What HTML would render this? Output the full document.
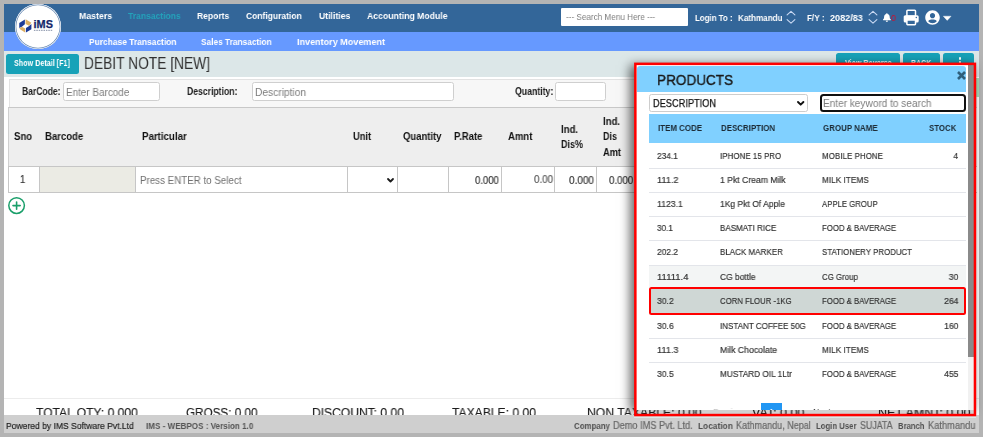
<!DOCTYPE html>
<html><head><meta charset="utf-8"><title>Debit Note</title>
<style>
html,body{margin:0;padding:0;}
body{width:983px;height:437px;overflow:hidden;background:#b4b4b4;position:relative;font-family:"Liberation Sans",sans-serif;}
.a{position:absolute;box-sizing:border-box;}
.t{will-change:transform;position:absolute;white-space:pre;line-height:20px;height:20px;font-family:"Liberation Sans",sans-serif;z-index:5;}
svg{position:absolute;overflow:visible;}
</style></head><body>
<!-- app background -->
<div class="a" style="left:4px;top:4px;width:975px;height:429px;background:#fff;"></div>
<!-- top nav -->
<div class="a" style="left:4px;top:4px;width:975px;height:28px;background:#336699;"></div>
<div class="a" style="left:4px;top:32px;width:975px;height:19px;background:#6699ff;"></div>
<!-- logo -->
<div class="a" style="left:14.5px;top:3.6px;width:46px;height:45.7px;border-radius:50%;background:#fff;box-shadow:inset 0 0 0 0.6px #fff, inset 0 0 0 1.3px #6a8bb3;z-index:6;"></div>
<svg style="left:0;top:0;z-index:7;" width="70" height="52" viewBox="0 0 70 52">
<polygon points="19.27,23.07 24.86,19.50 24.86,24.26 21.89,26.63 19.27,28.06" fill="#1b3a96"/>
<polygon points="25.58,19.26 31.40,22.71 29.02,25.68 25.58,23.90" fill="#dcae62"/>
<polygon points="19.27,28.78 21.89,26.87 25.10,28.54 25.10,32.58" fill="#dcae62"/>
<polygon points="31.40,23.90 31.40,29.13 25.93,32.46 25.93,28.06 28.79,26.16" fill="#1b3a96"/>
<text x="33.6" y="28.0" font-family="Liberation Sans, sans-serif" font-weight="700" font-size="10.2" fill="#14276a" stroke="#14276a" stroke-width="0.25" textLength="19.3" lengthAdjust="spacingAndGlyphs">iMS</text>
<line x1="33.9" y1="30.4" x2="52.8" y2="30.4" stroke="#9aa3b6" stroke-width="1.1" stroke-dasharray="1.5 0.9"/>
</svg>
<!-- search -->
<div class="a" style="left:561.3px;top:7.5px;width:126.7px;height:18.3px;background:#fff;border-radius:1px;"></div>
<!-- chevrons up/down -->
<svg style="left:786px;top:10px;" width="10" height="14" viewBox="0 0 10 14"><path d="M1.1 4.9 L5 1.3 L8.9 4.9 M1.1 9.6 L5 13.2 L8.9 9.6" fill="none" stroke="#c9d9f3" stroke-width="1.1" stroke-linecap="round" stroke-linejoin="round"/></svg>
<svg style="left:868px;top:10px;" width="10" height="14" viewBox="0 0 10 14"><path d="M1.1 4.9 L5 1.3 L8.9 4.9 M1.1 9.6 L5 13.2 L8.9 9.6" fill="none" stroke="#c9d9f3" stroke-width="1.1" stroke-linecap="round" stroke-linejoin="round"/></svg>
<!-- bell -->
<svg style="left:883.4px;top:12.7px;" width="7.8" height="9" viewBox="0 0 14 16"><path d="M7 16c1.1 0 2-.9 2-2H5c0 1.1.9 2 2 2zm6.7-4.7c-.6-.6-1.7-1.6-1.7-4.8 0-2.400-1.700-4.400-4-4.900V1c0-.6-.4-1-1-1S6 .4 6 1v.6c-2.300.5-4 2.500-4 4.900 0 3.200-1.100 4.200-1.700 4.800-.2.200-.3.400-.3.700 0 .5.400 1 1 1h12c.6 0 1-.5 1-1 0-.3-.1-.5-.3-.7z" fill="#fff"/></svg>
<!-- printer -->
<svg style="left:0;top:0;" width="983" height="32" viewBox="0 0 983 32">
<rect x="906.9" y="10.2" width="8.6" height="6" rx="0.8" fill="none" stroke="#fff" stroke-width="1.5"/>
<rect x="903.7" y="15.2" width="15" height="7.3" rx="1.6" fill="#fff"/>
<rect x="906.9" y="20.1" width="8.6" height="4.6" rx="0.6" fill="#336699" stroke="#fff" stroke-width="1.5"/>
<circle cx="916.3" cy="17.4" r="0.75" fill="#336699"/>
</svg>
<!-- user -->
<svg style="left:924.5px;top:9.5px;" width="15" height="15" viewBox="0 0 496 512"><path fill="#fff" d="M248 8C111 8 0 119 0 256s111 248 248 248 248-111 248-248S385 8 248 8zm0 96c48.600 0 88 39.400 88 88s-39.400 88-88 88-88-39.400-88-88 39.400-88 88-88zm0 344c-58.700 0-111.300-26.600-146.500-68.200 18.800-35.400 55.600-59.800 98.500-59.800 2.400 0 4.800.4 7.100 1.100 13 4.200 26.600 6.900 40.900 6.900 14.300 0 28-2.700 40.900-6.900 2.300-.7 4.700-1.100 7.100-1.100 42.900 0 79.700 24.400 98.500 59.800C359.300 421.400 306.700 448 248 448z"/></svg>
<svg style="left:942.8px;top:16.4px;" width="8.4" height="4.6" viewBox="0 0 8.4 4.6"><path d="M0.3 0.2 H8.1 L4.2 4.4 Z" fill="#fff" stroke="#fff" stroke-width="0.4" stroke-linejoin="round"/></svg>

<!-- title bar -->
<div class="a" style="left:4px;top:51px;width:975px;height:26.3px;background:#dce7e8;"></div>
<div class="a" style="left:5.7px;top:53.6px;width:73.2px;height:20.2px;background:#17a2b8;border-radius:2.5px;"></div>
<div class="a" style="left:836.3px;top:53.1px;width:64.2px;height:20.9px;background:#17a2b8;border-radius:2.5px;"></div>
<div class="a" style="left:903.4px;top:53.1px;width:36.6px;height:20.9px;background:#17a2b8;border-radius:2.5px;"></div>
<div class="a" style="left:943.4px;top:53.1px;width:31.1px;height:20.9px;background:#17a2b8;border-radius:2.5px;"></div>
<div class="a" style="left:958.7px;top:57.3px;width:2.4px;height:2.4px;border-radius:50%;background:#fff;"></div>
<div class="a" style="left:958.7px;top:61.3px;width:2.4px;height:2.4px;border-radius:50%;background:#fff;"></div>

<!-- form row -->
<div class="a" style="left:9px;top:79px;width:968px;height:28.6px;background:#f7f7f7;border:1px solid #e2e2e2;border-bottom:none;"></div>
<div class="a" style="left:62.5px;top:82.2px;width:97px;height:18.8px;background:#fff;border:1px solid #cfcfcf;border-radius:2.5px;"></div>
<div class="a" style="left:252.2px;top:82.2px;width:201.4px;height:18.8px;background:#fff;border:1px solid #cfcfcf;border-radius:2.5px;"></div>
<div class="a" style="left:555px;top:82.2px;width:50.8px;height:18.8px;background:#fff;border:1px solid #cfcfcf;border-radius:2.5px;"></div>
<div class="a" style="left:976.3px;top:78px;width:2.7px;height:19px;background:#a8dcb9;"></div>

<!-- table -->
<div class="a" style="left:8.2px;top:106.6px;width:969px;height:60px;background:#eeeeee;border:1px solid #cfcfcf;border-top:1.5px solid #c8c8c8;border-right:none;"></div>
<div class="a" style="left:8.2px;top:166.4px;width:969px;height:26.4px;background:#fff;border:1px solid #c6c6c6;border-right:none;"></div>
<div class="a" style="left:39.3px;top:167.2px;width:96.6px;height:24.8px;background:#ebebe4;border-left:1px solid #c6c6c6;border-right:1px solid #c6c6c6;"></div>
<div class="a" style="left:347.3px;top:167.2px;width:1px;height:24.8px;background:#c6c6c6;"></div>
<div class="a" style="left:396.9px;top:167.2px;width:1px;height:24.8px;background:#c6c6c6;"></div>
<div class="a" style="left:447.8px;top:167.2px;width:1px;height:24.8px;background:#c6c6c6;"></div>
<div class="a" style="left:501.2px;top:167.2px;width:1px;height:24.8px;background:#c6c6c6;"></div>
<div class="a" style="left:554.3px;top:167.2px;width:1px;height:24.8px;background:#c6c6c6;"></div>
<div class="a" style="left:596.3px;top:167.2px;width:1px;height:24.8px;background:#c6c6c6;"></div>
<svg style="left:386.9px;top:177.5px;" width="7" height="5" viewBox="0 0 7 5"><path d="M1 1 L3.500 3.500 L6 1" fill="none" stroke="#1a1a1a" stroke-width="1.8" stroke-linecap="round" stroke-linejoin="round"/></svg>
<!-- plus -->
<svg style="left:8.4px;top:197.2px;" width="17.2" height="17.2" viewBox="0 0 17.2 17.2"><circle cx="8.6" cy="8.6" r="7.8" fill="#fff" stroke="#1a9f6a" stroke-width="1.5"/><path d="M8.6 5 V12.2 M5 8.6 H12.2" stroke="#1a9f6a" stroke-width="1.6" stroke-linecap="round"/></svg>
<!-- faint line -->
<div class="a" style="left:4px;top:398.2px;width:975px;height:1px;background:#ececec;"></div>

<!-- footer -->
<div class="a" style="left:4px;top:414.7px;width:975px;height:18.3px;background:#cfcfcf;z-index:50;"></div>

<!-- modal shadow + box -->
<div class="a" style="left:636px;top:66px;width:338.5px;height:343px;background:#fff;box-shadow:-4px 1px 10px 2px rgba(0,0,0,.6);z-index:20;"></div>
<div class="a" style="left:636.4px;top:65px;width:338px;height:344.75px;background:#fff;z-index:23;"></div>
<div class="a" style="left:636.4px;top:409.75px;width:338px;height:6px;background:#d1d1d1;z-index:21;"></div>
<!-- modal header -->
<div class="a" style="left:637px;top:65.8px;width:329.4px;height:26px;background:#80d0ff;border-radius:3px 3px 0 0;z-index:24;"></div>
<svg style="left:956.8px;top:71.2px;z-index:25;" width="9" height="9" viewBox="0 0 9 9"><path d="M1 1 L8 8 M8 1 L1 8" stroke="#2f5f7c" stroke-width="2.6" stroke-linecap="butt"/></svg>
<!-- select + search -->
<div class="a" style="left:649.4px;top:94.3px;width:158.2px;height:17.4px;background:#fff;border:1px solid #cdcdcd;border-radius:2.5px;z-index:24;"></div>
<svg style="left:796.6px;top:100.6px;z-index:25;" width="7.4" height="5" viewBox="0 0 7.4 5"><path d="M1 1 L3.7 3.7 L6.4 1" fill="none" stroke="#111" stroke-width="1.9" stroke-linecap="round" stroke-linejoin="round"/></svg>
<div class="a" style="left:819.9px;top:94.3px;width:145.8px;height:17.700px;background:#fff;border:2px solid #111;border-radius:3.5px;z-index:24;"></div>
<!-- modal table header -->
<div class="a" style="left:649px;top:114.3px;width:317px;height:28.600px;background:#80d0ff;z-index:24;"></div>
<!-- rows -->
<div class="a" style="left:649px;top:167.6px;width:317px;height:1px;background:#e3e5ea;z-index:24;"></div>
<div class="a" style="left:649px;top:191.9px;width:317px;height:1px;background:#e3e5ea;z-index:24;"></div>
<div class="a" style="left:649px;top:216.2px;width:317px;height:1px;background:#e3e5ea;z-index:24;"></div>
<div class="a" style="left:649px;top:240.4px;width:317px;height:1px;background:#e3e5ea;z-index:24;"></div>
<div class="a" style="left:649px;top:264.7px;width:317px;height:23px;background:#f3f5f5;border-top:1px solid #e3e5ea;z-index:24;"></div>
<div class="a" style="left:649px;top:287.400px;width:317px;height:27.300px;background:#cfd7d5;border:2px solid #f00;border-radius:2.5px;z-index:25;"></div>
<div class="a" style="left:649px;top:337.600px;width:317px;height:1px;background:#e3e5ea;z-index:24;"></div>
<div class="a" style="left:649px;top:361.9px;width:317px;height:1px;background:#e3e5ea;z-index:24;"></div>
<!-- pagination -->
<div class="a" style="left:761.2px;top:402.9px;width:20.7px;height:6.85px;background:#2196f3;z-index:24;"></div>
<div class="a" style="left:636.4px;top:400px;width:331px;height:9.75px;overflow:hidden;z-index:25;">
<span class="t" style="left:76.5px;top:1.7px;font-size:9.3px;color:#c4c4c4;transform:scaleX(.93);transform-origin:0 50%;">Previous</span>
<span class="t" style="left:132.600px;top:1.6px;font-size:9.3px;color:#fff;">1</span>
<span class="t" style="left:176.600px;top:1.9px;font-size:9.3px;color:#333;transform:scaleX(.93);transform-origin:0 50%;">Next</span>
</div>
<!-- scrollbar -->
<div class="a" style="left:967.8px;top:65px;width:6px;height:344.75px;background:#f1f1f1;z-index:24;"></div>
<div class="a" style="left:967.8px;top:65px;width:6px;height:291.5px;background:#8a8a8a;z-index:25;"></div>
<div class="a" style="left:634.2px;top:416.3px;width:342px;height:1.8px;background:#dbe9e9;z-index:65;"></div>
<!-- red outline -->
<svg style="left:0;top:0;z-index:70;" width="983" height="437" viewBox="0 0 983 437"><rect x="635.35" y="63.85" width="339.6" height="351.2" fill="none" stroke="#ff0000" stroke-width="2.5"/></svg>

<span class="t" style="left:78.51px;transform-origin:0 50%;top:5.80px;font-size:9.8px;font-weight:700;color:#fff;transform:scaleX(0.8965);">Masters</span>
<span class="t" style="left:128.41px;transform-origin:0 50%;top:5.80px;font-size:9.8px;font-weight:700;color:#24a3bb;transform:scaleX(0.872);">Transactions</span>
<span class="t" style="left:197.41px;transform-origin:0 50%;top:5.80px;font-size:9.8px;font-weight:700;color:#fff;transform:scaleX(0.8722);">Reports</span>
<span class="t" style="left:246.01px;transform-origin:0 50%;top:5.80px;font-size:9.8px;font-weight:700;color:#fff;transform:scaleX(0.8673);">Configuration</span>
<span class="t" style="left:319.21px;transform-origin:0 50%;top:5.80px;font-size:9.8px;font-weight:700;color:#fff;transform:scaleX(0.8844);">Utilities</span>
<span class="t" style="left:367.21px;transform-origin:0 50%;top:5.80px;font-size:9.8px;font-weight:700;color:#fff;transform:scaleX(0.8857);">Accounting Module</span>
<span class="t" style="left:88.51px;transform-origin:0 50%;top:32.00px;font-size:9.8px;font-weight:700;color:#fff;transform:scaleX(0.8593);">Purchase Transaction</span>
<span class="t" style="left:201.01px;transform-origin:0 50%;top:32.00px;font-size:9.8px;font-weight:700;color:#fff;transform:scaleX(0.8486);">Sales Transaction</span>
<span class="t" style="left:296.71px;transform-origin:0 50%;top:32.00px;font-size:9.8px;font-weight:700;color:#fff;transform:scaleX(0.9236);">Inventory Movement</span>
<span class="t" style="left:565.51px;transform-origin:0 50%;top:7.00px;font-size:9.6px;font-weight:400;color:#808080;transform:scaleX(0.8493);">--- Search Menu Here ---</span>
<span class="t" style="left:695.22px;transform-origin:0 50%;top:8.00px;font-size:9.2px;font-weight:700;color:#fff;transform:scaleX(0.8578);">Login To :</span>
<span class="t" style="left:738.02px;transform-origin:0 50%;top:8.00px;font-size:9.2px;font-weight:700;color:#fff;transform:scaleX(0.8806);">Kathmandu</span>
<span class="t" style="left:806.72px;transform-origin:0 50%;top:8.00px;font-size:9.2px;font-weight:700;color:#fff;transform:scaleX(0.8861);">F/Y :</span>
<span class="t" style="left:829.72px;transform-origin:0 50%;top:8.00px;font-size:9.2px;font-weight:700;color:#fff;transform:scaleX(0.9874);">2082/83</span>
<span class="t" style="left:890.72px;transform-origin:0 50%;top:7.60px;font-size:9.4px;font-weight:400;color:#d0102e;transform:scaleX(0.93);">0</span>
<span class="t" style="left:13.84px;transform-origin:0 50%;top:52.60px;font-size:8.8px;font-weight:700;color:#fff;transform:scaleX(0.8168);">Show Detail [F1]</span>
<span class="t" style="left:83.90px;transform-origin:0 50%;top:53.60px;font-size:16.6px;font-weight:400;color:#303030;transform:scaleX(0.8299);">DEBIT NOTE [NEW]</span>
<span class="t" style="left:844.52px;transform-origin:0 50%;top:52.80px;font-size:9.4px;font-weight:700;color:#fff;transform:scaleX(0.7745);">View Reverse</span>
<span class="t" style="left:911.32px;transform-origin:0 50%;top:52.80px;font-size:9.4px;font-weight:700;color:#fff;transform:scaleX(0.7493);">BACK</span>
<span class="t" style="left:22.49px;transform-origin:0 50%;top:81.70px;font-size:10.4px;font-weight:700;color:#222;transform:scaleX(0.8233);">BarCode:</span>
<span class="t" style="left:66.09px;transform-origin:0 50%;top:82.80px;font-size:10.4px;font-weight:400;color:#7c7c7c;transform:scaleX(0.9528);">Enter Barcode</span>
<span class="t" style="left:186.69px;transform-origin:0 50%;top:81.70px;font-size:10.4px;font-weight:700;color:#222;transform:scaleX(0.8313);">Description:</span>
<span class="t" style="left:255.49px;transform-origin:0 50%;top:82.80px;font-size:10.4px;font-weight:400;color:#7c7c7c;transform:scaleX(0.9811);">Description</span>
<span class="t" style="left:514.69px;transform-origin:0 50%;top:81.70px;font-size:10.4px;font-weight:700;color:#222;transform:scaleX(0.8397);">Quantity:</span>
<span class="t" style="left:14.00px;transform-origin:0 50%;top:127.30px;font-size:10px;font-weight:700;color:#111;transform:scaleX(0.9581);">Sno</span>
<span class="t" style="left:45.00px;transform-origin:0 50%;top:127.30px;font-size:10px;font-weight:700;color:#111;transform:scaleX(0.9546);">Barcode</span>
<span class="t" style="left:142.00px;transform-origin:0 50%;top:127.30px;font-size:10px;font-weight:700;color:#111;transform:scaleX(0.9688);">Particular</span>
<span class="t" style="left:353.00px;transform-origin:0 50%;top:127.30px;font-size:10px;font-weight:700;color:#111;transform:scaleX(0.9356);">Unit</span>
<span class="t" style="left:403.00px;transform-origin:0 50%;top:127.30px;font-size:10px;font-weight:700;color:#111;transform:scaleX(0.9467);">Quantity</span>
<span class="t" style="left:453.70px;transform-origin:0 50%;top:127.30px;font-size:10px;font-weight:700;color:#111;transform:scaleX(0.9483);">P.Rate</span>
<span class="t" style="left:508.00px;transform-origin:0 50%;top:127.30px;font-size:10px;font-weight:700;color:#111;transform:scaleX(0.9545);">Amnt</span>
<span class="t" style="left:560.70px;transform-origin:0 50%;top:119.60px;font-size:10px;font-weight:700;color:#111;transform:scaleX(0.9561);">Ind.</span>
<span class="t" style="left:560.70px;transform-origin:0 50%;top:134.80px;font-size:10px;font-weight:700;color:#111;transform:scaleX(0.8997);">Dis%</span>
<span class="t" style="left:602.70px;transform-origin:0 50%;top:112.00px;font-size:10px;font-weight:700;color:#111;transform:scaleX(0.9561);">Ind.</span>
<span class="t" style="left:602.70px;transform-origin:0 50%;top:127.30px;font-size:10px;font-weight:700;color:#111;transform:scaleX(0.8996);">Dis</span>
<span class="t" style="left:602.70px;transform-origin:0 50%;top:142.50px;font-size:10px;font-weight:700;color:#111;transform:scaleX(0.9253);">Amt</span>
<span class="t" style="left:19.90px;transform-origin:0 50%;top:170.00px;font-size:10px;font-weight:400;color:#333;transform:scaleX(0.93);-webkit-text-stroke:0.18px #333;">1</span>
<span class="t" style="left:139.69px;transform-origin:0 50%;top:171.00px;font-size:10.2px;font-weight:400;color:#707070;transform:scaleX(0.9587);">Press ENTER to Select</span>
<span class="t" style="left:475.19px;transform-origin:0 50%;top:170.50px;font-size:10.2px;font-weight:400;color:#333;transform:scaleX(0.9333);-webkit-text-stroke:0.18px #333;">0.000</span>
<span class="t" style="left:534.19px;transform-origin:0 50%;top:169.80px;font-size:10.2px;font-weight:400;color:#555;transform:scaleX(0.9582);-webkit-text-stroke:0.18px #555;">0.00</span>
<span class="t" style="left:568.69px;transform-origin:0 50%;top:170.50px;font-size:10.2px;font-weight:400;color:#333;transform:scaleX(0.9765);-webkit-text-stroke:0.18px #333;">0.000</span>
<span class="t" style="left:609.49px;transform-origin:0 50%;top:170.50px;font-size:10.2px;font-weight:400;color:#333;transform:scaleX(0.949);-webkit-text-stroke:0.18px #333;">0.000</span>
<span class="t" style="left:36.22px;transform-origin:0 50%;top:403.30px;font-size:12.6px;font-weight:400;color:#1c1c1c;transform:scaleX(0.9579);z-index:22;-webkit-text-stroke:0.15px #1c1c1c;">TOTAL QTY: 0.000</span>
<span class="t" style="left:186.12px;transform-origin:0 50%;top:403.30px;font-size:12.6px;font-weight:400;color:#1c1c1c;transform:scaleX(0.9286);z-index:22;-webkit-text-stroke:0.15px #1c1c1c;">GROSS: 0.00</span>
<span class="t" style="left:312.12px;transform-origin:0 50%;top:403.30px;font-size:12.6px;font-weight:400;color:#1c1c1c;transform:scaleX(0.9594);z-index:22;-webkit-text-stroke:0.15px #1c1c1c;">DISCOUNT: 0.00</span>
<span class="t" style="left:451.62px;transform-origin:0 50%;top:403.30px;font-size:12.6px;font-weight:400;color:#1c1c1c;transform:scaleX(0.9624);z-index:22;-webkit-text-stroke:0.15px #1c1c1c;">TAXABLE: 0.00</span>
<span class="t" style="left:586.92px;transform-origin:0 50%;top:403.30px;font-size:12.6px;font-weight:400;color:#1c1c1c;transform:scaleX(0.9677);z-index:22;-webkit-text-stroke:0.15px #1c1c1c;">NON TAXABLE: 0.00</span>
<span class="t" style="left:752.32px;transform-origin:0 50%;top:403.30px;font-size:12.6px;font-weight:400;color:#1c1c1c;transform:scaleX(0.9915);z-index:22;-webkit-text-stroke:0.15px #1c1c1c;">VAT: 0.00</span>
<span class="t" style="left:877.62px;transform-origin:0 50%;top:403.30px;font-size:12.6px;font-weight:400;color:#1c1c1c;transform:scaleX(0.9897);z-index:22;-webkit-text-stroke:0.15px #1c1c1c;">NET AMNT: 0.00</span>
<span class="t" style="left:6.11px;transform-origin:0 50%;top:416.20px;font-size:9.8px;font-weight:400;color:#222;transform:scaleX(0.8724);z-index:60;-webkit-text-stroke:0.18px #222;">Powered by IMS Software Pvt.Ltd</span>
<span class="t" style="left:145.92px;transform-origin:0 50%;top:416.20px;font-size:9.2px;font-weight:700;color:#555;transform:scaleX(0.8793);z-index:60;">IMS - WEBPOS : Version 1.0</span>
<span class="t" style="left:574.32px;transform-origin:0 50%;top:415.95px;font-size:9.2px;font-weight:700;color:#505050;transform:scaleX(0.8573);z-index:60;">Company</span>
<span class="t" style="left:612.90px;transform-origin:0 50%;top:415.70px;font-size:10.0px;font-weight:400;color:#666;transform:scaleX(0.9204);z-index:60;-webkit-text-stroke:0.18px #666;">Demo IMS Pvt. Ltd.</span>
<span class="t" style="left:698.42px;transform-origin:0 50%;top:415.95px;font-size:9.2px;font-weight:700;color:#505050;transform:scaleX(0.9091);z-index:60;">Location</span>
<span class="t" style="left:735.90px;transform-origin:0 50%;top:415.70px;font-size:10.0px;font-weight:400;color:#666;transform:scaleX(0.9029);z-index:60;-webkit-text-stroke:0.18px #666;">Kathmandu, Nepal</span>
<span class="t" style="left:816.12px;transform-origin:0 50%;top:415.95px;font-size:9.2px;font-weight:700;color:#505050;transform:scaleX(0.8419);z-index:60;">Login User</span>
<span class="t" style="left:859.70px;transform-origin:0 50%;top:415.70px;font-size:10.0px;font-weight:400;color:#666;transform:scaleX(0.8817);z-index:60;-webkit-text-stroke:0.18px #666;">SUJATA</span>
<span class="t" style="left:898.42px;transform-origin:0 50%;top:415.95px;font-size:9.2px;font-weight:700;color:#505050;transform:scaleX(0.834);z-index:60;">Branch</span>
<span class="t" style="left:927.80px;transform-origin:0 50%;top:415.70px;font-size:10.0px;font-weight:400;color:#666;transform:scaleX(0.9285);z-index:60;-webkit-text-stroke:0.18px #666;">Kathmandu</span>
<span class="t" style="left:656.54px;transform-origin:0 50%;top:70.00px;font-size:15.2px;font-weight:400;color:#1a1a1a;transform:scaleX(0.894);z-index:30;-webkit-text-stroke:0.4px #1a1a1a;">PRODUCTS</span>
<span class="t" style="left:652.68px;transform-origin:0 50%;top:93.30px;font-size:10.7px;font-weight:400;color:#111;transform:scaleX(0.8638);z-index:30;-webkit-text-stroke:0.25px #111;">DESCRIPTION</span>
<span class="t" style="left:823.19px;transform-origin:0 50%;top:93.50px;font-size:10.3px;font-weight:400;color:#7d7d7d;transform:scaleX(0.9772);z-index:30;">Enter keyword to search</span>
<span class="t" style="left:658.22px;transform-origin:0 50%;top:118.30px;font-size:9.3px;font-weight:700;color:#1c2b36;transform:scaleX(0.8537);z-index:30;">ITEM CODE</span>
<span class="t" style="left:721.42px;transform-origin:0 50%;top:118.30px;font-size:9.3px;font-weight:700;color:#1c2b36;transform:scaleX(0.8513);z-index:30;">DESCRIPTION</span>
<span class="t" style="left:823.22px;transform-origin:0 50%;top:118.30px;font-size:9.3px;font-weight:700;color:#1c2b36;transform:scaleX(0.853);z-index:30;">GROUP NAME</span>
<span class="t" style="left:929.42px;transform-origin:0 50%;top:118.30px;font-size:9.3px;font-weight:700;color:#1c2b36;transform:scaleX(0.8432);z-index:30;">STOCK</span>
<span class="t" style="left:657.32px;transform-origin:0 50%;top:145.70px;font-size:9.3px;font-weight:400;color:#333;transform:scaleX(0.8983);z-index:30;-webkit-text-stroke:0.18px #333;">234.1</span>
<span class="t" style="left:719.62px;transform-origin:0 50%;top:145.70px;font-size:9.3px;font-weight:400;color:#333;transform:scaleX(0.8596);z-index:30;-webkit-text-stroke:0.18px #333;">IPHONE 15 PRO</span>
<span class="t" style="left:821.82px;transform-origin:0 50%;top:145.70px;font-size:9.3px;font-weight:400;color:#333;transform:scaleX(0.8618);z-index:30;-webkit-text-stroke:0.18px #333;">MOBILE PHONE</span>
<span class="t" style="right:24.600000000000023px;transform-origin:100% 50%;top:145.70px;font-size:9.3px;font-weight:400;color:#333;transform:scaleX(0.93);z-index:30;-webkit-text-stroke:0.18px #333;">4</span>
<span class="t" style="left:657.32px;transform-origin:0 50%;top:169.90px;font-size:9.3px;font-weight:400;color:#333;transform:scaleX(0.9776);z-index:30;-webkit-text-stroke:0.18px #333;">111.2</span>
<span class="t" style="left:719.62px;transform-origin:0 50%;top:169.90px;font-size:9.3px;font-weight:400;color:#333;transform:scaleX(0.9282);z-index:30;-webkit-text-stroke:0.18px #333;">1 Pkt Cream Milk</span>
<span class="t" style="left:821.82px;transform-origin:0 50%;top:169.90px;font-size:9.3px;font-weight:400;color:#333;transform:scaleX(0.888);z-index:30;-webkit-text-stroke:0.18px #333;">MILK ITEMS</span>
<span class="t" style="left:657.32px;transform-origin:0 50%;top:194.00px;font-size:9.3px;font-weight:400;color:#333;transform:scaleX(0.9333);z-index:30;-webkit-text-stroke:0.18px #333;">1123.1</span>
<span class="t" style="left:719.62px;transform-origin:0 50%;top:194.00px;font-size:9.3px;font-weight:400;color:#333;transform:scaleX(0.9165);z-index:30;-webkit-text-stroke:0.18px #333;">1Kg Pkt Of Apple</span>
<span class="t" style="left:821.82px;transform-origin:0 50%;top:194.00px;font-size:9.3px;font-weight:400;color:#333;transform:scaleX(0.8356);z-index:30;-webkit-text-stroke:0.18px #333;">APPLE GROUP</span>
<span class="t" style="left:657.32px;transform-origin:0 50%;top:218.20px;font-size:9.3px;font-weight:400;color:#333;transform:scaleX(0.8725);z-index:30;-webkit-text-stroke:0.18px #333;">30.1</span>
<span class="t" style="left:719.62px;transform-origin:0 50%;top:218.20px;font-size:9.3px;font-weight:400;color:#333;transform:scaleX(0.8672);z-index:30;-webkit-text-stroke:0.18px #333;">BASMATI RICE</span>
<span class="t" style="left:821.82px;transform-origin:0 50%;top:218.20px;font-size:9.3px;font-weight:400;color:#333;transform:scaleX(0.8355);z-index:30;-webkit-text-stroke:0.18px #333;">FOOD &amp; BAVERAGE</span>
<span class="t" style="left:657.32px;transform-origin:0 50%;top:242.30px;font-size:9.3px;font-weight:400;color:#333;transform:scaleX(0.9069);z-index:30;-webkit-text-stroke:0.18px #333;">202.2</span>
<span class="t" style="left:719.62px;transform-origin:0 50%;top:242.30px;font-size:9.3px;font-weight:400;color:#333;transform:scaleX(0.8633);z-index:30;-webkit-text-stroke:0.18px #333;">BLACK MARKER</span>
<span class="t" style="left:821.82px;transform-origin:0 50%;top:242.30px;font-size:9.3px;font-weight:400;color:#333;transform:scaleX(0.8471);z-index:30;-webkit-text-stroke:0.18px #333;">STATIONERY PRODUCT</span>
<span class="t" style="left:657.32px;transform-origin:0 50%;top:267.30px;font-size:9.3px;font-weight:400;color:#333;transform:scaleX(1.0208);z-index:30;-webkit-text-stroke:0.18px #333;">11111.4</span>
<span class="t" style="left:719.62px;transform-origin:0 50%;top:267.30px;font-size:9.3px;font-weight:400;color:#333;transform:scaleX(0.9063);z-index:30;-webkit-text-stroke:0.18px #333;">CG bottle</span>
<span class="t" style="left:821.82px;transform-origin:0 50%;top:267.30px;font-size:9.3px;font-weight:400;color:#333;transform:scaleX(0.8472);z-index:30;-webkit-text-stroke:0.18px #333;">CG Group</span>
<span class="t" style="right:24.600000000000023px;transform-origin:100% 50%;top:267.30px;font-size:9.3px;font-weight:400;color:#333;transform:scaleX(0.93);z-index:30;-webkit-text-stroke:0.18px #333;">30</span>
<span class="t" style="left:657.32px;transform-origin:0 50%;top:291.40px;font-size:9.3px;font-weight:400;color:#333;transform:scaleX(0.9222);z-index:30;-webkit-text-stroke:0.18px #333;">30.2</span>
<span class="t" style="left:719.62px;transform-origin:0 50%;top:291.40px;font-size:9.3px;font-weight:400;color:#333;transform:scaleX(0.835);z-index:30;-webkit-text-stroke:0.18px #333;">CORN FLOUR -1KG</span>
<span class="t" style="left:821.82px;transform-origin:0 50%;top:291.40px;font-size:9.3px;font-weight:400;color:#333;transform:scaleX(0.8355);z-index:30;-webkit-text-stroke:0.18px #333;">FOOD &amp; BAVERAGE</span>
<span class="t" style="right:24.600000000000023px;transform-origin:100% 50%;top:291.40px;font-size:9.3px;font-weight:400;color:#333;transform:scaleX(0.93);z-index:30;-webkit-text-stroke:0.18px #333;">264</span>
<span class="t" style="left:657.32px;transform-origin:0 50%;top:315.70px;font-size:9.3px;font-weight:400;color:#333;transform:scaleX(0.9222);z-index:30;-webkit-text-stroke:0.18px #333;">30.6</span>
<span class="t" style="left:719.62px;transform-origin:0 50%;top:315.70px;font-size:9.3px;font-weight:400;color:#333;transform:scaleX(0.8635);z-index:30;-webkit-text-stroke:0.18px #333;">INSTANT COFFEE 50G</span>
<span class="t" style="left:821.82px;transform-origin:0 50%;top:315.70px;font-size:9.3px;font-weight:400;color:#333;transform:scaleX(0.8355);z-index:30;-webkit-text-stroke:0.18px #333;">FOOD &amp; BAVERAGE</span>
<span class="t" style="right:24.600000000000023px;transform-origin:100% 50%;top:315.70px;font-size:9.3px;font-weight:400;color:#333;transform:scaleX(0.93);z-index:30;-webkit-text-stroke:0.18px #333;">160</span>
<span class="t" style="left:657.32px;transform-origin:0 50%;top:339.80px;font-size:9.3px;font-weight:400;color:#333;transform:scaleX(0.9776);z-index:30;-webkit-text-stroke:0.18px #333;">111.3</span>
<span class="t" style="left:719.62px;transform-origin:0 50%;top:339.80px;font-size:9.3px;font-weight:400;color:#333;transform:scaleX(0.9363);z-index:30;-webkit-text-stroke:0.18px #333;">Milk Chocolate</span>
<span class="t" style="left:821.82px;transform-origin:0 50%;top:339.80px;font-size:9.3px;font-weight:400;color:#333;transform:scaleX(0.888);z-index:30;-webkit-text-stroke:0.18px #333;">MILK ITEMS</span>
<span class="t" style="left:657.32px;transform-origin:0 50%;top:364.00px;font-size:9.3px;font-weight:400;color:#333;transform:scaleX(0.9222);z-index:30;-webkit-text-stroke:0.18px #333;">30.5</span>
<span class="t" style="left:719.62px;transform-origin:0 50%;top:364.00px;font-size:9.3px;font-weight:400;color:#333;transform:scaleX(0.8865);z-index:30;-webkit-text-stroke:0.18px #333;">MUSTARD OIL 1Ltr</span>
<span class="t" style="left:821.82px;transform-origin:0 50%;top:364.00px;font-size:9.3px;font-weight:400;color:#333;transform:scaleX(0.8355);z-index:30;-webkit-text-stroke:0.18px #333;">FOOD &amp; BAVERAGE</span>
<span class="t" style="right:24.600000000000023px;transform-origin:100% 50%;top:364.00px;font-size:9.3px;font-weight:400;color:#333;transform:scaleX(0.93);z-index:30;-webkit-text-stroke:0.18px #333;">455</span>
</body></html>
